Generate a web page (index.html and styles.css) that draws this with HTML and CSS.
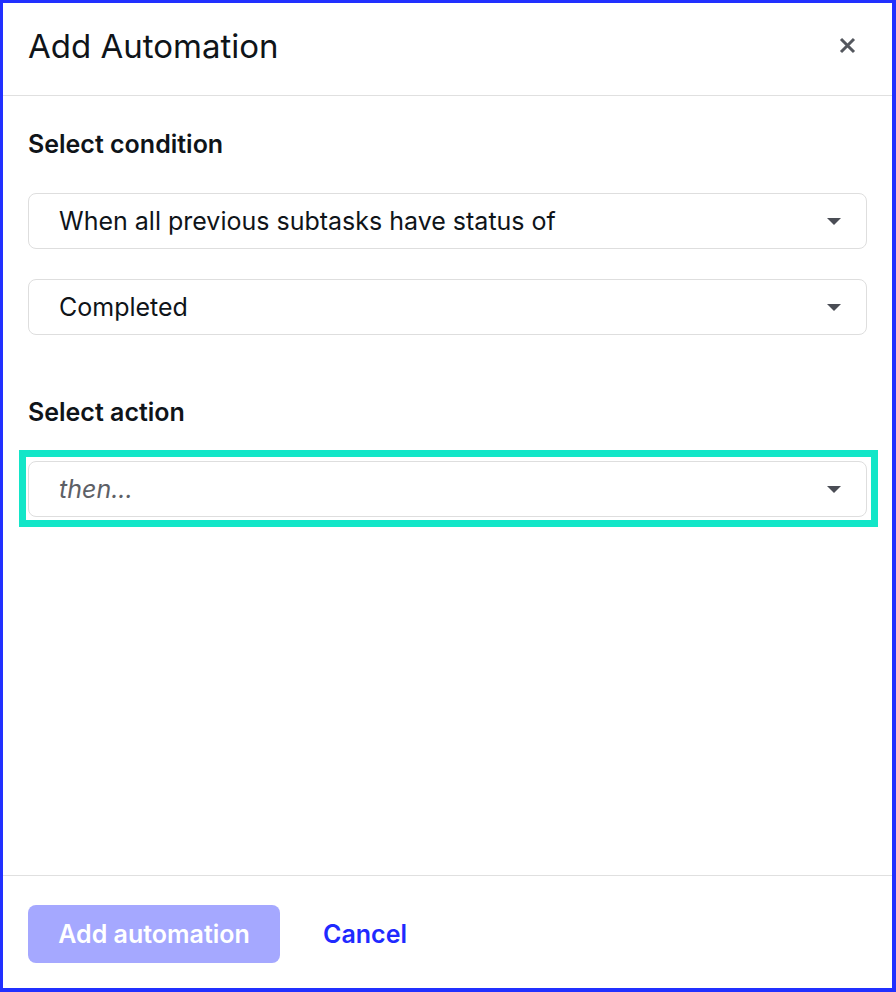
FILE: index.html
```html
<!DOCTYPE html>
<html>
<head>
<meta charset="utf-8">
<link rel="stylesheet" href="styles.css">
</head>
<body>
<div class="frame">
  <div class="header">
    <h1 class="title">Add Automation</h1>
    <button class="close" aria-label="Close">
      <svg width="17" height="17" viewBox="0 0 17 17"><path d="M2 2 L15 15 M15 2 L2 15" stroke="#54575e" stroke-width="3" stroke-linecap="butt"/></svg>
    </button>
  </div>
  <div class="content">
    <div class="label label-first">Select condition</div>
    <div class="select">
      <span class="value">When all previous subtasks have status of</span>
      <span class="caret"></span>
    </div>
    <div class="select select-second">
      <span class="value">Completed</span>
      <span class="caret"></span>
    </div>
    <div class="label label-second">Select action</div>
    <div class="focus-ring">
      <div class="select">
        <span class="value placeholder">then...</span>
        <span class="caret"></span>
      </div>
    </div>
  </div>
  <div class="footer">
    <button class="btn-primary" disabled>Add automation</button>
    <button class="btn-link">Cancel</button>
  </div>
</div>
</body>
</html>
```
FILE: styles.css
```css
* { box-sizing: border-box; }
html, body { margin: 0; padding: 0; background: #ffffff; }
body { font-family: Inter, "Noto Sans", sans-serif; color: #0f1419; }
.frame {
  width: 896px;
  height: 992px;
  border-style: solid;
  border-color: #2130ff;
  border-width: 3px 4px 4px 3px;
  display: flex;
  flex-direction: column;
  background: #fff;
}
.header {
  height: 93px;
  border-bottom: 1px solid #e0e0e0;
  display: flex;
  align-items: center;
  justify-content: space-between;
  padding: 0 36px 7px 25px;
}
.title {
  margin: 0;
  font-size: 33px;
  font-weight: 400;
  line-height: 40px;
  color: #0f1419;
}
.close {
  background: none;
  border: 0;
  padding: 0;
  width: 17px;
  height: 17px;
  display: flex;
}
.content {
  flex: 1;
  padding: 0 25px 0 25px;
  display: flex;
  flex-direction: column;
}
.label {
  font-size: 25px;
  font-weight: 600;
  color: #0f1419;
  line-height: 28px;
}
.label-first { margin-top: 34px; margin-bottom: 35px; }
.label-second { margin-top: 63px; margin-bottom: 35px; }
.select {
  height: 56px;
  border: 1px solid #dedede;
  border-radius: 8px;
  display: flex;
  align-items: center;
  justify-content: space-between;
  padding: 0 25px 0 30px;
  background: #fff;
}
.select-second { margin-top: 30px; }
.value {
  font-size: 25px;
  color: #0f1419;
}
.placeholder {
  font-style: italic;
  color: #5d6066;
}
.caret {
  width: 0;
  height: 0;
  border-left: 7px solid transparent;
  border-right: 7px solid transparent;
  border-top: 7px solid #4a4d55;
}
.focus-ring {
  border: 7px solid #13e6c8;
  padding: 4px 4px 3px 2px;
  margin: -11px -11px -10px -9px;
}
.footer {
  border-top: 1px solid #e0e0e0;
  padding: 29px 25px 25px 25px;
  display: flex;
  align-items: center;
  gap: 43px;
}
.btn-primary {
  width: 252px;
  height: 58px;
  border: 0;
  border-radius: 8px;
  background: #a5a8ff;
  color: #fff;
  font-family: Inter, "Noto Sans", sans-serif;
  font-size: 25px;
  font-weight: 600;
}
.btn-link {
  border: 0;
  background: none;
  padding: 0;
  color: #1f2aff;
  font-family: Inter, "Noto Sans", sans-serif;
  font-size: 25px;
  font-weight: 600;
}
```
